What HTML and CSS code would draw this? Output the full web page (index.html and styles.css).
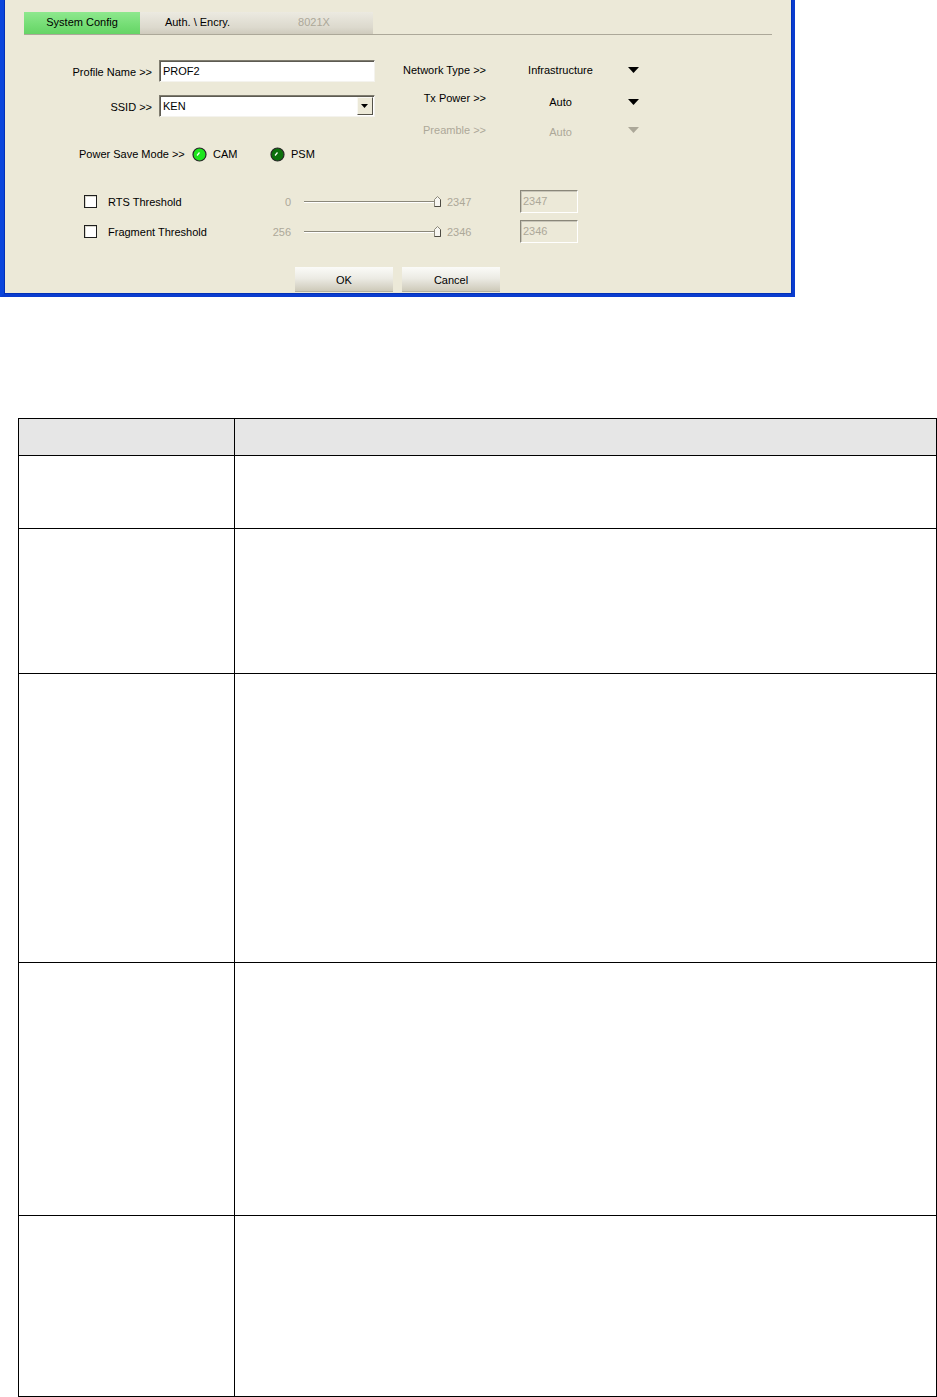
FILE: index.html
```html
<!DOCTYPE html>
<html lang="en">
<head>
    <meta charset="UTF-8">
    <meta name="viewport" content="width=device-width, initial-scale=1.0">
    <title>Profile - System Config</title>
    <link rel="stylesheet" href="styles.css">
</head>
<body>
    <div class="dialog">
        <div class="tabs">
            <div class="tab tab-active">System Config</div>
            <div class="tab">Auth. \ Encry.</div>
            <div class="tab tab-disabled">8021X</div>
        </div>

        <div class="settings">
            <div class="col-left">
                <div class="field">
                    <span class="field-label">Profile Name &gt;&gt;</span>
                    <div class="textbox">PROF2</div>
                </div>
                <div class="field">
                    <span class="field-label">SSID &gt;&gt;</span>
                    <div class="textbox combo">
                        <span>KEN</span>
                        <span class="combo-btn">
                            <svg width="8" height="4" viewBox="0 0 8 4"><path d="M0 0h7L3.5 4z" fill="#000"/></svg>
                        </span>
                    </div>
                </div>
                <div class="power">
                    <span class="power-label">Power Save Mode &gt;&gt;</span>
                    <span class="radio">
                        <svg width="15" height="15" viewBox="0 0 15 15"><circle cx="7.5" cy="7.5" r="6.5" fill="#1de51d" stroke="#262626" stroke-width="1.2"/><path d="M5 8.5L7.5 5.5" stroke="#fff" stroke-width="1.2"/></svg>
                        CAM
                    </span>
                    <span class="radio">
                        <svg width="15" height="15" viewBox="0 0 15 15"><circle cx="7.5" cy="7.5" r="6.5" fill="#0c700c" stroke="#262626" stroke-width="1.2"/><path d="M5 8.5L7.5 5.5" stroke="#fff" stroke-width="1.2"/></svg>
                        PSM
                    </span>
                </div>
            </div>

            <div class="col-right">
                <div class="option">
                    <span class="option-label">Network Type &gt;&gt;</span>
                    <span class="option-value">Infrastructure</span>
                    <svg class="option-arrow" width="11" height="6" viewBox="0 0 11 6"><path d="M0 0h11L5.5 6z" fill="#000"/></svg>
                </div>
                <div class="option">
                    <span class="option-label raised">Tx Power &gt;&gt;</span>
                    <span class="option-value lowered">Auto</span>
                    <svg class="option-arrow lowered" width="11" height="6" viewBox="0 0 11 6"><path d="M0 0h11L5.5 6z" fill="#000"/></svg>
                </div>
                <div class="option disabled">
                    <span class="option-label">Preamble &gt;&gt;</span>
                    <span class="option-value lowered">Auto</span>
                    <svg class="option-arrow" width="11" height="6" viewBox="0 0 11 6"><path d="M0 0h11L5.5 6z" fill="#aca899"/></svg>
                </div>
            </div>
        </div>

        <div class="thresholds">
            <div class="threshold">
                <span class="checkbox"></span>
                <span class="threshold-label">RTS Threshold</span>
                <span class="range-min">0</span>
                <span class="slider">
                    <span class="track"></span>
                    <svg class="thumb" width="7" height="11" viewBox="0 0 7 11"><path d="M0.5 10.5V3.5L3.5 0.5L6.5 3.5V10.5Z" fill="#f7f6f1" stroke="#8a877a"/><path d="M6.5 3.5V10.5H0.5" fill="none" stroke="#4d4b42"/></svg>
                </span>
                <span class="range-max">2347</span>
                <div class="valuebox">2347</div>
            </div>
            <div class="threshold">
                <span class="checkbox"></span>
                <span class="threshold-label">Fragment Threshold</span>
                <span class="range-min">256</span>
                <span class="slider">
                    <span class="track"></span>
                    <svg class="thumb" width="7" height="11" viewBox="0 0 7 11"><path d="M0.5 10.5V3.5L3.5 0.5L6.5 3.5V10.5Z" fill="#f7f6f1" stroke="#8a877a"/><path d="M6.5 3.5V10.5H0.5" fill="none" stroke="#4d4b42"/></svg>
                </span>
                <span class="range-max">2346</span>
                <div class="valuebox">2346</div>
            </div>
        </div>

        <div class="actions">
            <button class="btn">OK</button>
            <button class="btn">Cancel</button>
        </div>
    </div>

    <div class="grid-table">
        <div class="cell head"></div>
        <div class="cell head"></div>
        <div class="cell"></div>
        <div class="cell"></div>
        <div class="cell"></div>
        <div class="cell"></div>
        <div class="cell"></div>
        <div class="cell"></div>
        <div class="cell"></div>
        <div class="cell"></div>
        <div class="cell"></div>
        <div class="cell"></div>
    </div>
</body>
</html>
```

FILE: styles.css
```css
* {
    box-sizing: border-box;
    margin: 0;
    padding: 0;
}

body {
    font-family: 'Liberation Sans', Arial, sans-serif;
    font-size: 11px;
    color: #000;
    background-color: #fff;
}

/* dialog */

.dialog {
    width: 795px;
    height: 297px;
    padding: 12px 0 0 20px;
    background-color: #ece9d8;
    border-left: 4px solid #0a45dc;
    border-right: 3px solid #0a3ccf;
    border-bottom: 3px solid #0a3ccf;
    box-shadow: inset 1px 0 0 #0030b8, inset -1px -1px 0 #0030b8;
}

.tabs {
    display: flex;
    width: 748px;
    height: 23px;
    border-bottom: 1px solid #aca899;
}

.tab {
    width: 115px;
    height: 22px;
    line-height: 21px;
    text-align: center;
    background: linear-gradient(#eceae1, #dcd9cd 70%, #cfcbbd);
}

.tab-active {
    width: 116px;
    background: linear-gradient(#8ee88e, #74dd74 60%, #66d466);
}

.tab-disabled {
    width: 118px;
    color: #aca899;
}

.settings {
    display: flex;
    margin-top: 25px;
}

.col-left {
    display: flex;
    flex-direction: column;
    width: 352px;
}

.field {
    display: flex;
    align-items: center;
    height: 22px;
    margin-bottom: 13px;
}

.field-label {
    width: 135px;
    padding: 2px 7px 0 0;
    text-align: right;
}

.textbox {
    display: flex;
    align-items: center;
    width: 216px;
    height: 22px;
    padding-left: 3px;
    background-color: #fff;
    border: 1px solid;
    border-color: #7f7c6f #f4f3ee #f4f3ee #7f7c6f;
    box-shadow: inset 1px 1px 0 #5d5b52;
}

.combo {
    justify-content: space-between;
    padding-right: 1px;
}

.combo-btn {
    display: flex;
    align-items: center;
    justify-content: center;
    width: 16px;
    height: 18px;
    background-color: #ece9d8;
    border: 1px solid;
    border-color: #f9f8f3 #55534a #55534a #f9f8f3;
}

.power {
    display: flex;
    align-items: center;
    height: 14px;
    margin-top: 17px;
    padding-left: 55px;
}

.power-label {
    width: 113px;
}

.radio {
    display: flex;
    align-items: center;
    gap: 6px;
    width: 78px;
}

.col-right {
    display: flex;
    flex-direction: column;
    gap: 16px;
    padding: 3px 0 0 24px;
}

.option {
    display: flex;
    align-items: center;
    height: 14px;
}

.option-label {
    width: 86px;
    text-align: right;
}

.option-value {
    width: 73px;
    margin-left: 38px;
    text-align: center;
}

.option-arrow {
    margin-left: 31px;
}

.raised {
    position: relative;
    top: -2px;
}

.lowered {
    position: relative;
    top: 2px;
}

.disabled {
    color: #aca899;
}

/* thresholds */

.thresholds {
    display: flex;
    flex-direction: column;
    gap: 7px;
    margin-top: 29px;
    padding-left: 60px;
}

.threshold {
    display: flex;
    align-items: center;
    height: 23px;
}

.checkbox {
    width: 13px;
    height: 13px;
    margin-right: 11px;
    background-color: #fff;
    border: 1px solid #1e1e1e;
    box-shadow: inset 1px 1px 0 #d8d6cc;
}

.threshold-label {
    width: 160px;
}

.range-min {
    width: 23px;
    margin-right: 13px;
    text-align: right;
    color: #aca899;
}

.slider {
    display: flex;
    align-items: center;
    width: 137px;
    height: 11px;
}

.track {
    flex-grow: 1;
    height: 2px;
    margin-top: 1px;
    border-top: 1px solid #8a877a;
    border-bottom: 1px solid #fff;
}

.thumb {
    flex-shrink: 0;
}

.range-max {
    width: 73px;
    margin-left: 6px;
    color: #aca899;
}

.valuebox {
    width: 58px;
    height: 23px;
    padding: 4px 0 0 2px;
    color: #aca899;
    border: 1px solid;
    border-color: #8a877a #fff #fff #8a877a;
    box-shadow: inset 1px 1px 0 #c8c5b8;
}

.actions {
    display: flex;
    justify-content: center;
    gap: 9px;
    margin-top: 24px;
    padding-right: 21px;
}

.btn {
    width: 98px;
    height: 25px;
    font-family: inherit;
    font-size: 11px;
    color: #000;
    border: none;
    background: linear-gradient(#fbfbf8, #ecebe4 45%, #cbc7b6);
    box-shadow: inset 0 -1px 0 #b5b19f;
}

/* table */

.grid-table {
    display: grid;
    grid-template-columns: 216px 702px;
    grid-template-rows: 37px 73px 145px 289px 253px 181px;
    width: 919px;
    margin: 121px 0 0 18px;
    border-top: 1px solid #000;
    border-left: 1px solid #000;
}

.cell {
    border-right: 1px solid #000;
    border-bottom: 1px solid #000;
}

.head {
    background-color: #e6e6e6;
}
```
